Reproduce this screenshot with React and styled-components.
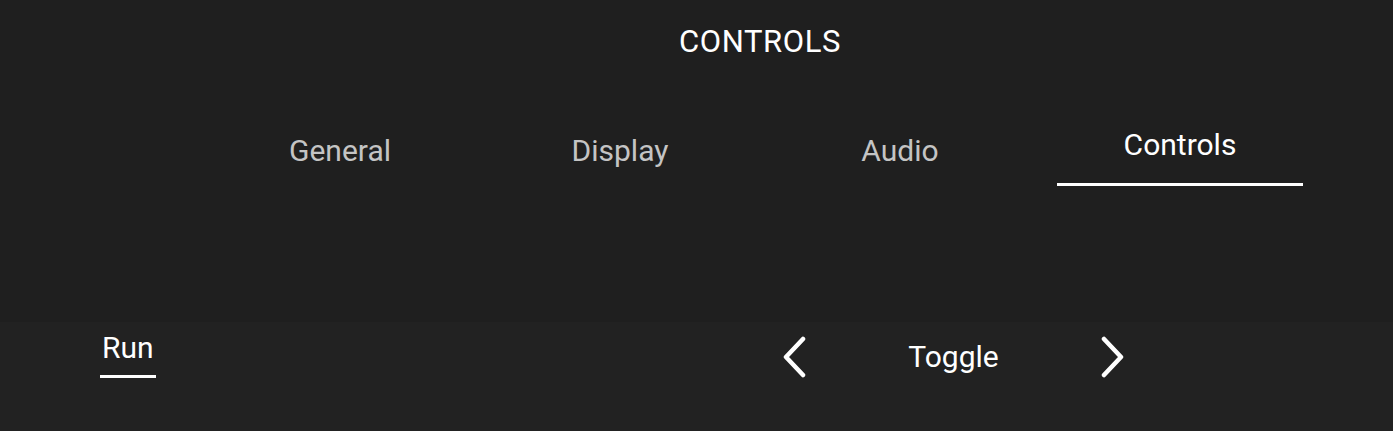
import React, { useState } from 'react'
import styled, { createGlobalStyle } from 'styled-components'

const GlobalStyle = createGlobalStyle`
  html, body {
    margin: 0;
    padding: 0;
    background: #1f1f1f;
  }
  body {
    font-family: Roboto, "Liberation Sans", sans-serif;
    color: #ffffff;
  }
`

const Page = styled.div`
  width: 1393px;
  height: 431px;
  overflow: hidden;
  background: #1f1f1f;
`

const Header = styled.div`
  padding-left: 200px;
  width: 1120px;
`

const Title = styled.h1`
  margin: 0;
  height: 82px;
  display: flex;
  align-items: center;
  justify-content: center;
  font-size: 31px;
  font-weight: 400;
  letter-spacing: 0.6px;
  color: #ffffff;
`

const TabBar = styled.div`
  display: grid;
  grid-template-columns: repeat(4, 280px);
`

const Tab = styled.button`
  margin: 0 17px;
  height: 104px;
  padding: 0;
  padding-top: ${({ $active }) => ($active ? '45px' : '51px')};
  box-sizing: border-box;
  display: flex;
  justify-content: center;
  align-items: flex-start;
  background: transparent;
  border: none;
  border-bottom: 3px solid ${({ $active }) => ($active ? '#ffffff' : 'transparent')};
  font-family: inherit;
  font-size: 30px;
  line-height: 36px;
  color: ${({ $active }) => ($active ? '#ffffff' : '#c4c4c4')};
  cursor: pointer;
`

const Settings = styled.div`
  margin-top: 136px;
`

const Row = styled.div`
  height: 109px;
  box-sizing: border-box;
  padding: 8px 0 0 100px;
  background: #222222;
  display: grid;
  grid-template-columns: 675px auto;
  align-items: start;
`

const Label = styled.span`
  justify-self: start;
  padding: 0 2px 9px;
  border-bottom: 3px solid ${({ $active }) => ($active ? '#ffffff' : 'transparent')};
  font-size: 30px;
  line-height: 36px;
  color: #ffffff;
`

const Selector = styled.div`
  height: 54px;
  display: flex;
  align-items: center;
`

const Arrow = styled.button`
  width: 40px;
  height: 54px;
  padding: 0;
  display: flex;
  align-items: center;
  justify-content: center;
  background: transparent;
  border: none;
  cursor: pointer;
`

const Value = styled.span`
  width: 277px;
  text-align: center;
  font-size: 30px;
  line-height: 36px;
  color: #ffffff;
`

const Chevron = ({ dir }) => (
  <svg width="26" height="42" viewBox="0 0 26 42" fill="none">
    <polyline
      points={dir === 'left' ? '21,3 4,21 21,39' : '5,3 22,21 5,39'}
      stroke="#ffffff"
      strokeWidth="4.5"
      strokeLinecap="round"
      strokeLinejoin="round"
    />
  </svg>
)

const tabs = ['General', 'Display', 'Audio', 'Controls']

export default function App() {
  const [tab, setTab] = useState('Controls')
  return (
    <Page>
      <GlobalStyle />
      <Header>
        <Title>CONTROLS</Title>
        <TabBar>
          {tabs.map((t) => (
            <Tab key={t} $active={t === tab} onClick={() => setTab(t)}>
              {t}
            </Tab>
          ))}
        </TabBar>
      </Header>
      <Settings>
        <Row>
          <Label $active>Run</Label>
          <Selector>
            <Arrow>
              <Chevron dir="left" />
            </Arrow>
            <Value>Toggle</Value>
            <Arrow>
              <Chevron dir="right" />
            </Arrow>
          </Selector>
        </Row>
      </Settings>
    </Page>
  )
}
